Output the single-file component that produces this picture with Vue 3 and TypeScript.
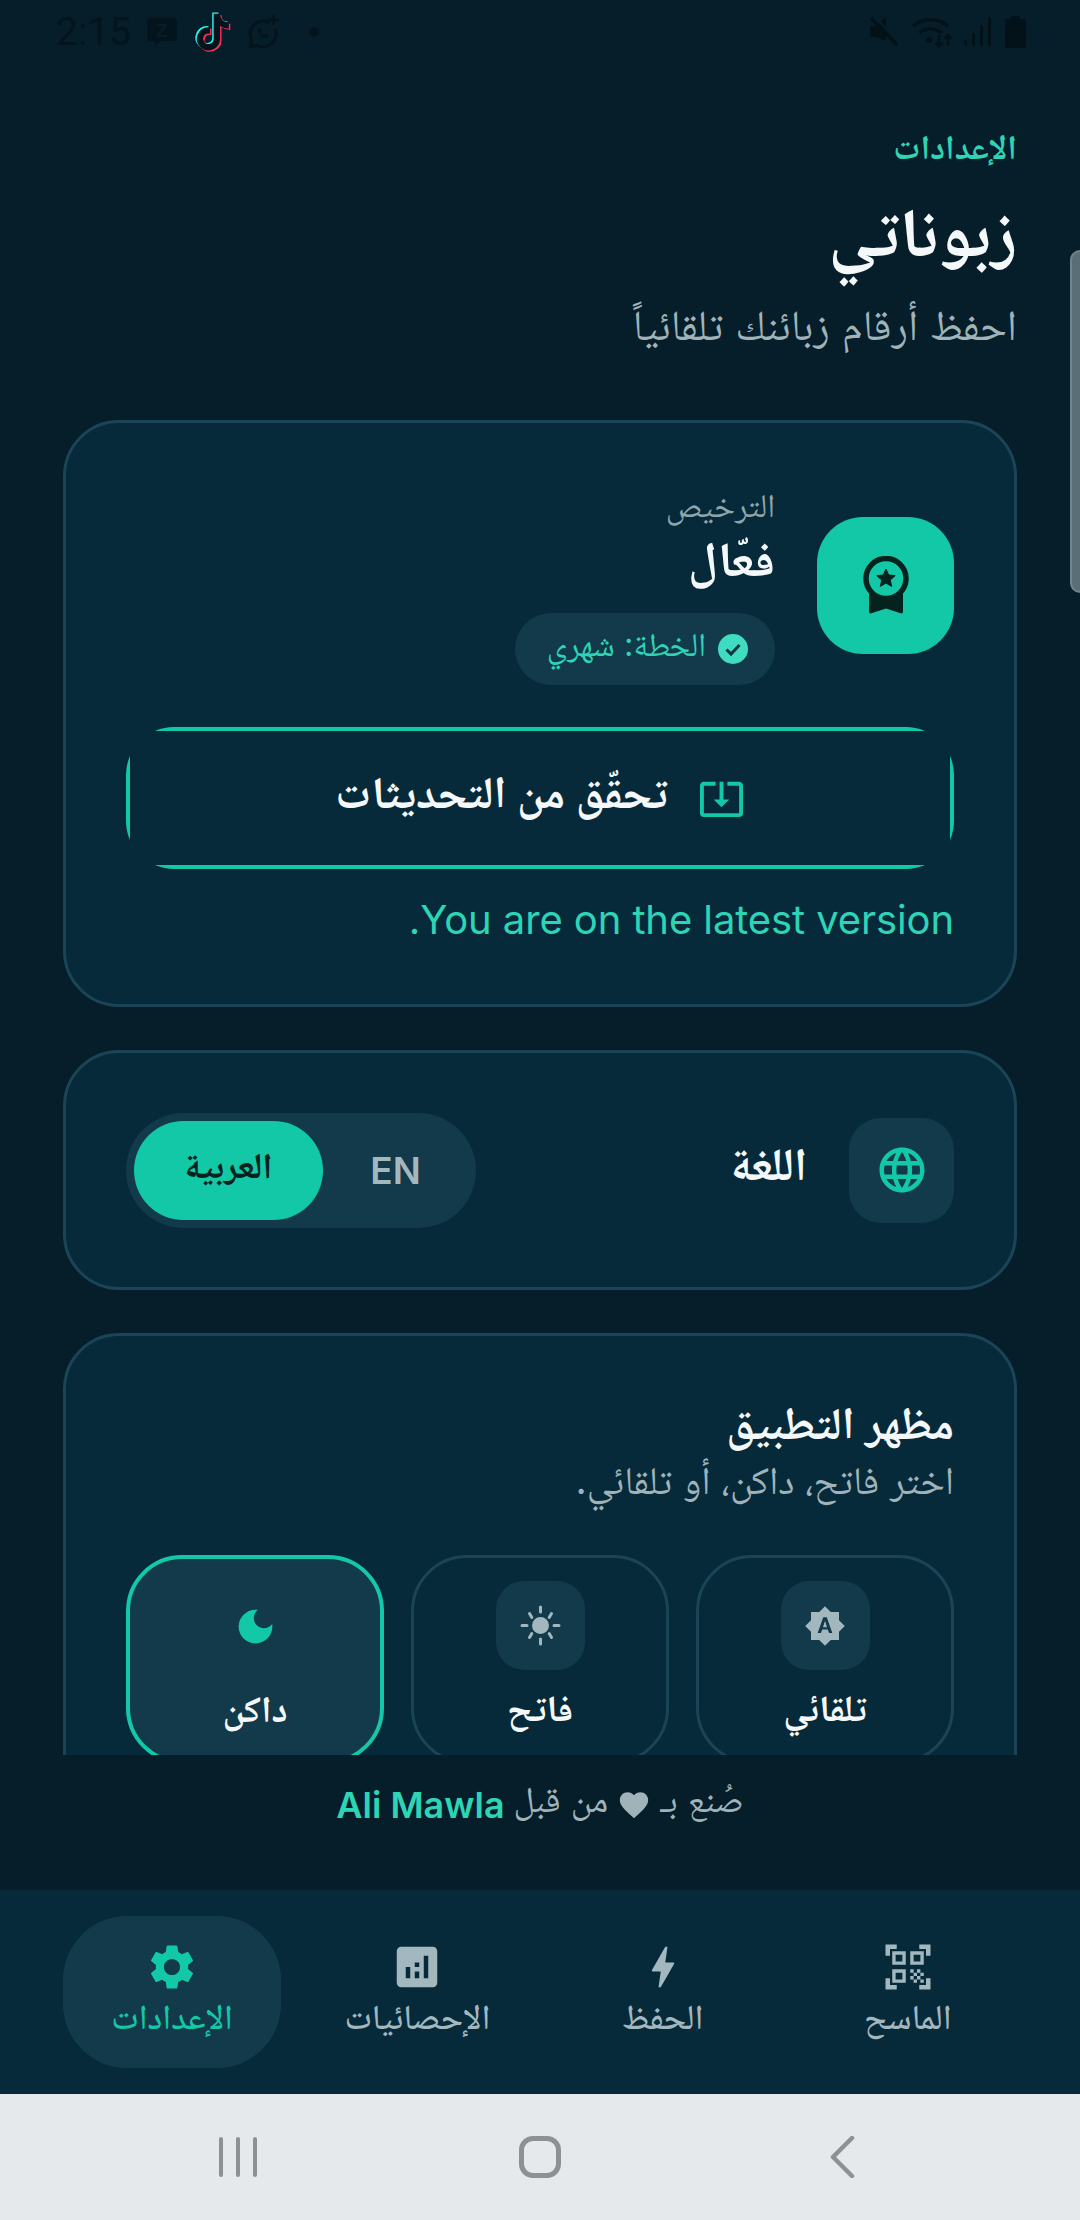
<template>
  <div class="phone" dir="rtl">
    <!-- status bar -->
    <div class="status-bar" dir="ltr">
      <div class="status-left">
        <span class="clock">2:15</span>
        <svg class="ic-z" viewBox="0 0 30 28">
          <path d="M3 0h24a3 3 0 0 1 3 3v17a3 3 0 0 1-3 3H14l-6 5v-5H3a3 3 0 0 1-3-3V3a3 3 0 0 1 3-3z" fill="#04141d" />
          <text x="15" y="19" text-anchor="middle" class="z-letter">Z</text>
        </svg>
        <svg class="ic-tiktok" viewBox="0 0 24 24">
          <path :d="tiktok" fill="#25f4ee" transform="translate(-.8 -.6)" />
          <path :d="tiktok" fill="#fe2c55" transform="translate(.8 .7)" />
          <path :d="tiktok" fill="#04141d" />
        </svg>
        <svg class="ic-wa" viewBox="0 0 34 34">
          <path d="M21.500 7.200A13 13 0 0 0 4.800 25.500L3 32l6.800-1.800A13 13 0 0 0 28.500 15.500" fill="none" stroke="#04141d" stroke-width="3" stroke-linejoin="round" stroke-linecap="round" />
          <path d="M26.500 0v10M21.500 5h10" stroke="#04141d" stroke-width="2.400" />
          <path transform="translate(5.500 7.500) scale(.88)" :d="waPhone" fill="#04141d" />
        </svg>
        <span class="status-dot"></span>
      </div>
      <div class="status-right">
        <svg class="ic-mute" viewBox="0 0 28 31">
          <path d="M0 10h6l10-9v24L6 21H0z" fill="#031218" />
          <path d="M1 2l26 27" stroke="#031218" stroke-width="3.500" />
          <path d="M4 0l25 26" stroke="#04202d" stroke-width="2" />
        </svg>
        <svg class="ic-wifi" viewBox="0 0 42 32">
          <g fill="none" stroke="#031218" stroke-width="3.200">
            <path d="M2 10a27 27 0 0 1 35 0" />
            <path d="M8.500 17a17 17 0 0 1 22 0" />
          </g>
          <circle cx="18" cy="24" r="3" fill="#031218" />
          <path d="M28 19v11M24.500 26.500l3.500 4 3.500-4M37 30V19M33.500 23l3.500-4 3.500 4" fill="none" stroke="#031218" stroke-width="2.400" />
        </svg>
        <svg class="ic-signal" viewBox="0 0 27 29">
          <rect x="0" y="23" width="3" height="6" fill="#031218" />
          <rect x="8" y="16" width="3" height="13" fill="#031218" />
          <rect x="16" y="8" width="3" height="21" fill="#031218" />
          <rect x="24" y="0" width="3" height="29" fill="#031218" />
        </svg>
        <svg class="ic-batt" viewBox="0 0 21 32">
          <path d="M6 0h9v3h4a2 2 0 0 1 2 2v25a2 2 0 0 1-2 2H2a2 2 0 0 1-2-2V5a2 2 0 0 1 2-2h4z" fill="#031218" />
        </svg>
      </div>
    </div>

    <!-- scrolling content -->
    <div class="scroll">
      <div class="eyebrow">الإعدادات</div>
      <h1 class="page-title">زبوناتي</h1>
      <p class="page-sub">احفظ أرقام زبائنك تلقائياً</p>

      <section class="card license-card">
        <div class="license-row">
          <div class="license-icon">
            <svg viewBox="0 0 46 58" class="award">
              <path d="M6 34v21.500c0 1.500 1 2.300 2.500 1.800L23 52.500l14.500 4.800c1.500.5 2.500-.3 2.500-1.800V34z" fill="#04231f" />
              <circle cx="23" cy="22.500" r="20" fill="#13c8a6" stroke="#04231f" stroke-width="5.500" />
              <path d="M23 13l2.700 6 6.500.7-4.900 4.300 1.400 6.400-5.700-3.300-5.700 3.300 1.400-6.400-4.900-4.300 6.500-.7z" fill="#04231f" stroke="#04231f" stroke-linejoin="round" />
            </svg>
          </div>
          <div class="license-text">
            <div class="license-label">الترخيص</div>
            <div class="license-status">فعّال</div>
            <div class="plan-pill">
              <svg viewBox="0 0 30 30" class="plan-check">
                <circle cx="15" cy="15" r="15" fill="#3fdcc0" />
                <path d="M8.500 15.500l4.500 4.500 8.500-9" fill="none" stroke="#0f3445" stroke-width="3" />
              </svg>
              <span>الخطة: شهري</span>
            </div>
          </div>
        </div>
        <button class="update-btn">
          <span class="update-inner">
            <svg viewBox="0 0 24 24" class="update-icon"><path d="M12 16.500l4-4h-3v-9h-2v9H8l4 4zm9-13h-6v1.990h6v14.030H3V5.490h6V3.500H3c-1.100 0-2 .9-2 2v14c0 1.100.9 2 2 2h18c1.100 0 2-.9 2-2v-14c0-1.100-.9-2-2-2z" /></svg>
            <span>تحقّق من التحديثات</span>
          </span>
        </button>
        <p class="version-msg">You are on the latest version.</p>
      </section>

      <section class="card lang-card">
        <div class="lang-icon">
          <svg viewBox="0 0 24 24"><path :d="globe" /></svg>
        </div>
        <div class="lang-title">اللغة</div>
        <div class="lang-toggle">
          <button class="lang-opt">EN</button>
          <button class="lang-opt selected">العربية</button>
        </div>
      </section>

      <section class="card theme-card">
        <h2 class="theme-title">مظهر التطبيق</h2>
        <p class="theme-sub">اختر فاتح، داكن، أو تلقائي.</p>
        <div class="theme-grid">
          <div v-for="t in themes" :key="t.id" class="theme-tile" :class="{ active: t.id === 'dark' }">
            <div class="theme-icon">
              <svg v-if="t.id === 'auto'" viewBox="0 0 24 24" class="ic-auto"><path d="M10.850 12.650h2.300L12 9l-1.150 3.650zM20 8.690V4h-4.690L12 .69 8.690 4H4v4.690L.69 12 4 15.310V20h4.690L12 23.310 15.310 20H20v-4.690L23.310 12 20 8.690zM14.300 16l-.7-2h-3.200l-.7 2H7.800L11 7h2l3.200 9h-1.900z" /></svg>
              <svg v-else-if="t.id === 'light'" viewBox="0 0 41 41" class="ic-sun">
                <circle cx="20.500" cy="20.500" r="7" />
                <path d="M20.500 2v5M20.500 34v5M2 20.500h5M34 20.500h5M9.500 8.500l2.300 4M31.500 8.500l-2.300 4M9.500 32.500l2.300-4M31.500 32.500l-2.300-4" />
              </svg>
              <svg v-else viewBox="0 0 24 24" class="ic-moon"><path d="M12 3c-4.970 0-9 4.030-9 9s4.030 9 9 9 9-4.030 9-9c0-.46-.04-.92-.1-1.360-.98 1.370-2.580 2.260-4.400 2.260-2.980 0-5.400-2.420-5.400-5.400 0-1.810.89-3.420 2.260-4.400-.44-.06-.9-.1-1.360-.1z" /></svg>
            </div>
            <div class="theme-name">{{ t.label }}</div>
          </div>
        </div>
      </section>
    </div>

    <!-- scrollbar thumb sits over the page -->
    <div class="scroll-thumb"></div>

    <footer class="credit">
      <span>صُنع بـ</span>
      <svg viewBox="0 0 24 24" class="heart"><path d="M12 21.400 10.500 20C5.400 15.400 2 12.300 2 8.500 2 5.400 4.400 3 7.500 3c1.700 0 3.400.8 4.500 2.100C13.100 3.800 14.800 3 16.500 3 19.600 3 22 5.400 22 8.500c0 3.800-3.400 6.900-8.500 11.500z" /></svg>
      <span>من قبل</span>
      <span class="credit-name">Ali Mawla</span>
    </footer>

    <nav class="tabs">
      <div v-for="tab in tabs" :key="tab.id" class="tab" :class="{ active: tab.id === 'settings' }">
        <svg viewBox="0 0 24 24"><path :d="tab.icon" fill-rule="evenodd" /></svg>
        <span>{{ tab.label }}</span>
      </div>
    </nav>

    <!-- android nav -->
    <div class="android-nav" dir="ltr">
      <div class="android-btn">
        <svg viewBox="0 0 38 40" width="38" height="40"><path d="M2 2v36M19 2v36M36 2v36" stroke="#8e9194" stroke-width="4" stroke-linecap="round" /></svg>
      </div>
      <div class="android-btn">
        <div class="android-home"></div>
      </div>
      <div class="android-btn">
        <svg viewBox="0 0 26 42" width="26" height="42"><path d="M23 2 4 21l19 19" fill="none" stroke="#8e9194" stroke-width="4.500" stroke-linecap="round" stroke-linejoin="round" /></svg>
      </div>
    </div>
  </div>
</template>

<script setup lang="ts">
interface Tab {
  id: string
  label: string
  icon: string
}

const tiktok = 'M19.59 6.69a4.83 4.83 0 0 1-3.77-4.25V2h-3.45v13.67a2.89 2.89 0 0 1-5.2 1.74 2.89 2.89 0 0 1 2.31-4.64 2.93 2.93 0 0 1 .88.13V9.4a6.84 6.84 0 0 0-1-.05A6.33 6.33 0 0 0 5 20.1a6.34 6.34 0 0 0 10.86-4.43v-7a8.16 8.16 0 0 0 4.77 1.52v-3.4a4.85 4.85 0 0 1-1-.1z'
const waPhone = 'M17.472 14.382c-.297-.149-1.758-.867-2.03-.967-.273-.099-.471-.148-.67.15-.197.297-.767.966-.94 1.164-.173.199-.347.223-.644.075-.297-.15-1.255-.463-2.39-1.475-.883-.788-1.48-1.761-1.653-2.059-.173-.297-.018-.458.13-.606.134-.133.298-.347.446-.52.149-.174.198-.298.298-.497.099-.198.05-.371-.025-.52-.075-.149-.669-1.612-.916-2.207-.242-.579-.487-.5-.669-.51-.173-.008-.371-.01-.57-.01-.198 0-.52.074-.792.372-.272.297-1.04 1.016-1.04 2.479 0 1.462 1.065 2.875 1.213 3.074.149.198 2.096 3.2 5.077 4.487.709.306 1.262.489 1.694.625.712.227 1.36.195 1.871.118.571-.085 1.758-.719 2.006-1.413.248-.694.248-1.289.173-1.413-.074-.124-.272-.198-.57-.347z'
const globe = 'M11.99 2C6.47 2 2 6.48 2 12s4.47 10 9.99 10C17.52 22 22 17.52 22 12S17.52 2 11.99 2zm6.93 6h-2.95c-.32-1.25-.78-2.45-1.38-3.56 1.84.63 3.37 1.91 4.33 3.56zM12 4.04c.83 1.2 1.48 2.53 1.91 3.96h-3.82c.43-1.43 1.08-2.76 1.91-3.96zM4.26 14C4.1 13.36 4 12.69 4 12s.1-1.36.26-2h3.38c-.08.66-.14 1.32-.14 2s.06 1.34.14 2H4.26zm.82 2h2.95c.32 1.25.78 2.45 1.38 3.56-1.84-.63-3.37-1.9-4.33-3.56zm2.95-8H5.08c.96-1.66 2.49-2.93 4.33-3.56C8.81 5.55 8.35 6.75 8.03 8zM12 19.96c-.83-1.2-1.48-2.53-1.91-3.96h3.82c-.43 1.43-1.08 2.76-1.91 3.96zM14.34 14H9.66c-.09-.66-.16-1.32-.16-2s.07-1.35.16-2h4.68c.09.65.16 1.32.16 2s-.07 1.34-.16 2zm.25 5.56c.6-1.11 1.06-2.31 1.38-3.56h2.95c-.96 1.65-2.49 2.93-4.33 3.56zM16.36 14c.08-.66.14-1.32.14-2s-.06-1.34-.14-2h3.38c.16.64.26 1.31.26 2s-.1 1.36-.26 2h-3.38z'

const themes = [
  { id: 'auto', label: 'تلقائي' },
  { id: 'light', label: 'فاتح' },
  { id: 'dark', label: 'داكن' }
]

const tabs: Tab[] = [
  {
    id: 'scan',
    label: 'الماسح',
    icon: 'M9.5 6.5v3h-3v-3h3M11 5H5v6h6V5zm-1.5 9.5v3h-3v-3h3M11 13H5v6h6v-6zm6.5-6.5v3h-3v-3h3M19 5h-6v6h6V5zm-6 8h1.5v1.5H13V13zm1.5 1.5H16V16h-1.5v-1.5zM16 13h1.5v1.5H16V13zm-3 3h1.5v1.5H13V16zm1.5 1.5H16V19h-1.5v-1.5zM16 16h1.5v1.5H16V16zm1.5-1.5H19V16h-1.5v-1.5zm0 3H19V19h-1.5v-1.5zM22 7h-2V4h-3V2h5v5zm0 15v-5h-2v3h-3v2h5zM2 22h5v-2H4v-3H2v5zM2 2v5h2V4h3V2H2z'
  },
  {
    id: 'save',
    label: 'الحفظ',
    icon: 'M11 21h-1l1-7H7.5c-.58 0-.57-.32-.38-.66.19-.34.05-.08.07-.12C8.48 10.94 10.42 7.54 13 3h1l-1 7h3.5c.49 0 .56.33.47.51l-.07.15C12.96 17.55 11 21 11 21z'
  },
  {
    id: 'stats',
    label: 'الإحصائيات',
    icon: 'M19 3H5c-1.1 0-2 .9-2 2v14c0 1.1.9 2 2 2h14c1.1 0 2-.9 2-2V5c0-1.1-.9-2-2-2zM9 17H7v-5h2v5zm4 0h-2v-3h2v3zm0-5h-2v-2h2v2zm4 5h-2V7h2v10z'
  },
  {
    id: 'settings',
    label: 'الإعدادات',
    icon: 'M19.14 12.94c.04-.3.06-.61.06-.94 0-.32-.02-.64-.07-.94l2.03-1.58c.18-.14.23-.41.12-.61l-1.92-3.32c-.12-.22-.37-.29-.59-.22l-2.39.96c-.5-.38-1.03-.7-1.62-.94l-.36-2.54c-.04-.24-.24-.41-.48-.41h-3.84c-.24 0-.43.17-.47.41l-.36 2.54c-.59.24-1.13.57-1.62.94l-2.39-.96c-.22-.08-.47 0-.59.22L2.74 8.87c-.12.21-.08.47.12.61l2.03 1.58c-.05.3-.09.63-.09.94s.02.64.07.94l-2.03 1.58c-.18.14-.23.41-.12.61l1.92 3.32c.12.22.37.29.59.22l2.39-.96c.5.38 1.03.7 1.62.94l.36 2.54c.05.24.24.41.48.41h3.84c.24 0 .44-.17.47-.41l.36-2.54c.59-.24 1.13-.56 1.62-.94l2.39.96c.22.08.47 0 .59-.22l1.92-3.32c.12-.22.07-.47-.12-.61l-2.01-1.58zM12 15.6c-1.98 0-3.6-1.62-3.6-3.6s1.62-3.6 3.6-3.6 3.6 1.62 3.6 3.6-1.62 3.6-3.6 3.6z'
  }
]
</script>

<style>
html,
body {
  margin: 0;
  background: #061d2a;
}
</style>

<style scoped>
.phone {
  position: relative;
  width: 1080px;
  height: 2220px;
  overflow: hidden;
  display: flex;
  flex-direction: column;
  background: #061d2a;
  color: #f4f8f9;
  font-family: Inter, "Noto Naskh Arabic", "Noto Sans Arabic", "DejaVu Sans", sans-serif;
}

/* status bar */
.status-bar {
  height: 62px;
  flex: none;
  display: flex;
  justify-content: space-between;
  align-items: flex-start;
  padding: 13px 54px 0 56px;
  box-sizing: border-box;
}

.status-left,
.status-right {
  display: flex;
  align-items: center;
  height: 37px;
}

.clock {
  font-family: Roboto, sans-serif;
  font-weight: 400;
  font-size: 39px;
  color: #04141d;
  width: 91px;
}

.ic-z { width: 30px; height: 28px; }
.z-letter { font-family: "Liberation Sans", sans-serif; font-weight: 700; font-size: 19px; fill: #061d2a; }
.ic-tiktok { width: 44px; height: 44px; margin: 0 8px 0 14px; }
.ic-wa { width: 34px; height: 34px; margin-left: 4px; }
.status-dot { width: 10px; height: 10px; border-radius: 50%; background: #04141d; margin-left: 28px; }
.ic-mute { width: 28px; height: 31px; }
.ic-wifi { width: 42px; height: 32px; margin-left: 13px; }
.ic-signal { width: 27px; height: 29px; margin-left: 11px; }
.ic-batt { width: 21px; height: 32px; margin-left: 14px; }

/* scrolling area */
.scroll {
  height: 1693px;
  flex: none;
  overflow: hidden;
  padding: 0 63px;
  box-sizing: border-box;
}

.eyebrow {
  margin-top: 64px;
  font-size: 34px;
  line-height: 42px;
  font-weight: 700;
  color: #2dd4b5;
}

.page-title {
  margin: 19px 0 0;
  font-size: 69px;
  line-height: 90px;
  font-weight: 700;
}

.page-sub {
  margin: 23px 0 0;
  font-size: 42.7px;
  line-height: 50px;
  color: #9fb3b9;
}

.card {
  margin-top: 43px;
  border: 3px solid #1b4557;
  border-radius: 56px;
  background: #072a3b;
  box-sizing: border-box;
  padding: 0 60px;
}

.license-card {
  height: 587px;
  margin-top: 70px;
  padding-top: 62px;
}

.license-row {
  display: flex;
  align-items: center;
  gap: 42px;
}

.license-icon {
  width: 137px;
  height: 137px;
  flex: none;
  border-radius: 46px;
  background: #13c8a6;
  display: flex;
  align-items: center;
  justify-content: center;
}

.award { width: 46px; height: 58px; }

.license-label {
  font-size: 33px;
  line-height: 40px;
  color: #8fa4ab;
}

.license-status {
  margin-top: 4px;
  font-size: 49px;
  line-height: 60px;
  font-weight: 700;
}

.plan-pill {
  margin-top: 24px;
  height: 72px;
  width: 260px;
  box-sizing: border-box;
  border-radius: 36px;
  background: #123a4b;
  display: flex;
  align-items: center;
  gap: 12px;
  padding: 0 27px;
  font-size: 33px;
  color: #2dd4b5;
  white-space: nowrap;
}

.plan-check { width: 30px; height: 30px; flex: none; }

/* the outline is only the teal showing past a square inner panel */
.update-btn {
  display: block;
  margin-top: 42px;
  width: 100%;
  height: 142px;
  padding: 4px;
  border: none;
  border-radius: 48px;
  background: #13c8a6;
  color: #f4f8f9;
  font: inherit;
  font-size: 45px;
  font-weight: 700;
}

.update-inner {
  height: 100%;
  display: flex;
  align-items: center;
  justify-content: center;
  gap: 30px;
  background: #072a3b;
}

.update-icon { width: 47px; height: 47px; fill: #13c8a6; }

.version-msg {
  margin: 26px 0 0;
  font-size: 40px;
  letter-spacing: -0.1px;
  line-height: 50px;
  color: #2dd4b5;
}

.lang-card {
  height: 240px;
  display: flex;
  align-items: center;
}

.lang-icon {
  width: 105px;
  height: 105px;
  flex: none;
  border-radius: 32px;
  background: #123a4b;
  display: flex;
  align-items: center;
  justify-content: center;
}

.lang-icon svg { width: 54px; height: 54px; fill: #13c8a6; }

.lang-title {
  margin-right: 42px;
  font-size: 46px;
  font-weight: 700;
}

.lang-toggle {
  margin-right: auto;
  width: 350px;
  height: 115px;
  box-sizing: border-box;
  padding: 8px;
  border-radius: 58px;
  background: #123a4b;
  display: flex;
}

.lang-opt {
  flex: 1;
  border: none;
  border-radius: 50px;
  background: transparent;
  color: #a3b8be;
  font: inherit;
  font-size: 37px;
  font-weight: 600;
}

.lang-opt.selected {
  flex: none;
  width: 189px;
  background: #13c8a6;
  color: #04231f;
  font-size: 36px;
  font-weight: 700;
}

.theme-card {
  height: 560px;
  padding-top: 59px;
}

.theme-title {
  margin: 0;
  font-size: 45px;
  line-height: 56px;
  font-weight: 700;
}

.theme-sub {
  margin: 4px 0 0;
  font-size: 39px;
  line-height: 50px;
  color: #9fb3b9;
}

.theme-grid {
  margin-top: 50px;
  display: grid;
  grid-template-columns: repeat(3, 1fr);
  gap: 27px;
}

.theme-tile {
  height: 209px;
  box-sizing: border-box;
  border: 3px solid #1b4557;
  border-radius: 56px;
  padding-top: 23px;
  display: flex;
  flex-direction: column;
  align-items: center;
}

.theme-tile.active {
  border: 4px solid #13c8a6;
  background: #123a4b;
}

.theme-icon {
  width: 89px;
  height: 89px;
  flex: none;
  border-radius: 28px;
  background: #123a4b;
  display: flex;
  align-items: center;
  justify-content: center;
}

.ic-auto { width: 42px; height: 42px; fill: #a3b8be; }
.ic-moon { width: 45px; height: 45px; fill: #13c8a6; }
.ic-sun { width: 41px; height: 41px; fill: #a3b8be; stroke: #a3b8be; stroke-width: 3; stroke-linecap: round; }

.theme-name {
  margin-top: 16px;
  font-size: 37px;
  line-height: 44px;
  font-weight: 700;
}

.scroll-thumb {
  position: absolute;
  top: 250px;
  left: 1070px;
  width: 10px;
  height: 343px;
  box-sizing: border-box;
  border: 2px solid #72848b;
  border-right: none;
  border-radius: 10px 0 0 10px;
  background: #5a6e76;
}

/* credit line */
.credit {
  height: 135px;
  flex: none;
  box-sizing: border-box;
  padding-bottom: 36px;
  display: flex;
  align-items: center;
  justify-content: center;
  gap: 9px;
  font-size: 36px;
  color: #9fb3b9;
}

.heart { width: 34px; height: 34px; fill: #9fb3b9; }

.credit-name {
  font-weight: 600;
  color: #2dd4b5;
}

/* bottom tabs */
.tabs {
  height: 204px;
  flex: none;
  box-sizing: border-box;
  background: #072a3b;
  padding: 26px 63px 0;
  display: grid;
  grid-template-columns: repeat(4, 1fr);
  gap: 27px;
  align-items: start;
}

.tab {
  height: 152px;
  border-radius: 64px;
  display: flex;
  flex-direction: column;
  align-items: center;
  padding-top: 24px;
  box-sizing: border-box;
  color: #a3b8be;
  fill: currentColor;
  font-size: 35px;
  font-weight: 500;
}

.tab svg { width: 54px; height: 54px; flex: none; }
.tab span { line-height: 44px; white-space: nowrap; }

.tab.active {
  background: #123a4b;
  color: #13c8a6;
}

/* android buttons */
.android-nav {
  height: 126px;
  flex: none;
  background: #e6e9ec;
  display: flex;
  justify-content: center;
  align-items: center;
}

.android-btn {
  width: 302px;
  display: flex;
  justify-content: center;
}

.android-home {
  width: 42px;
  height: 42px;
  box-sizing: border-box;
  border: 5px solid #8e9194;
  border-radius: 14px;
}
</style>
